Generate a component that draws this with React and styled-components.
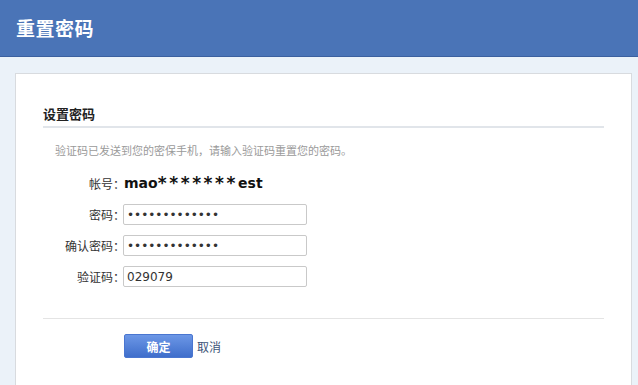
import React from "react";
import styled, { createGlobalStyle } from "styled-components";

const GlobalStyle = createGlobalStyle`
  html, body {
    margin: 0;
    padding: 0;
    background: #ebf2f9;
    font-family: "Noto Sans CJK SC", "Liberation Sans", sans-serif;
    overflow: hidden;
  }
`;

const App = () => {
  return (
    <Page>
      <GlobalStyle />
      <Header>
        <HeaderTitle>重置密码</HeaderTitle>
      </Header>

      <Body>
        <Card>
          <SectionTitle>设置密码</SectionTitle>
          <Info>验证码已发送到您的密保手机，请输入验证码重置您的密码。</Info>

          <Form>
            <Row>
              <Label>帐号：</Label>
              <Account>
                mao<Stars>*******</Stars>est
              </Account>
            </Row>
            <Row $gap={9}>
              <Label>密码：</Label>
              <Input type="password" readOnly defaultValue="abcdefghijklm" />
            </Row>
            <Row $gap={10}>
              <Label>确认密码：</Label>
              <Input type="password" readOnly defaultValue="abcdefghijklm" />
            </Row>
            <Row $gap={10}>
              <Label>验证码：</Label>
              <Input type="text" readOnly defaultValue="029079" />
            </Row>
          </Form>

          <Divider />

          <Actions>
            <Button>确定</Button>
            <CancelLink>取消</CancelLink>
          </Actions>
        </Card>
      </Body>
    </Page>
  );
};

export default App;

const Page = styled.div`
  width: 638px;
  height: 385px;
  overflow: hidden;
`;

const Header = styled.div`
  height: 56px;
  background: #4a74b7;
  border-bottom: 1px solid #3b609f;
  display: flex;
  align-items: center;
  padding-left: 16px;
`;

const HeaderTitle = styled.h1`
  margin: 0;
  color: #ffffff;
  font-size: 19px;
  font-weight: 700;
  line-height: 24px;
  letter-spacing: 0.5px;
`;

const Body = styled.div`
  padding: 16px 6px 0 15px;
`;

const Card = styled.div`
  background: #ffffff;
  border: 1px solid #d8dbdf;
  border-bottom: none;
  height: 400px;
  padding: 31px 27px 0 27px;
`;

const SectionTitle = styled.h2`
  margin: 0;
  font-size: 13px;
  font-weight: 700;
  line-height: 18px;
  color: #222;
  padding-bottom: 3px;
  border-bottom: 2px solid #e1e5ea;
`;

const Info = styled.p`
  margin: 14px 0 0 12px;
  font-size: 11px;
  line-height: 16px;
  color: #9a9a9a;
`;

const Form = styled.div`
  margin-top: 13px;
  display: flex;
  flex-direction: column;
`;

const Row = styled.div`
  display: grid;
  grid-template-columns: 80px 184px;
  align-items: center;
  margin-top: ${(p) => p.$gap || 0}px;
  min-height: 21px;
`;

const Label = styled.span`
  text-align: right;
  font-size: 12px;
  line-height: 21px;
  color: #333;
  white-space: nowrap;
  margin-right: -2px;
`;

const Account = styled.span`
  display: block;
  height: 24px;
  overflow: visible;
  font-family: "DejaVu Sans", Verdana, sans-serif;
  font-weight: 700;
  font-size: 14px;
  line-height: 24px;
  color: #111;
  padding-left: 1px;
  white-space: nowrap;
`;

const Stars = styled.span`
  font-size: 17px;
  line-height: 0;
  letter-spacing: 2.6px;
  position: relative;
  top: 1px;
`;

const Input = styled.input`
  box-sizing: border-box;
  width: 184px;
  height: 21px;
  margin: 0;
  padding: 0 3px;
  border: 1px solid #c9c9c9;
  border-radius: 2px;
  background: #fff;
  font-family: "DejaVu Sans", Verdana, sans-serif;
  font-size: 12px;
  color: #333;
  outline: none;
`;

const Divider = styled.div`
  margin-top: 31px;
  height: 1px;
  background: #e4e4e4;
`;

const Actions = styled.div`
  margin-top: 15px;
  padding-left: 81px;
  display: flex;
  align-items: center;
  gap: 4px;
`;

const Button = styled.button`
  width: 69px;
  height: 24px;
  border: 1px solid #4a76d0;
  border-radius: 2px;
  background: linear-gradient(#6c97e6, #3f6ecb);
  color: #fff;
  font-family: "Noto Sans CJK SC", sans-serif;
  font-size: 12px;
  font-weight: 700;
  padding: 0;
  cursor: pointer;
`;

const CancelLink = styled.a`
  font-size: 12px;
  color: #3d5478;
  cursor: pointer;
`;
